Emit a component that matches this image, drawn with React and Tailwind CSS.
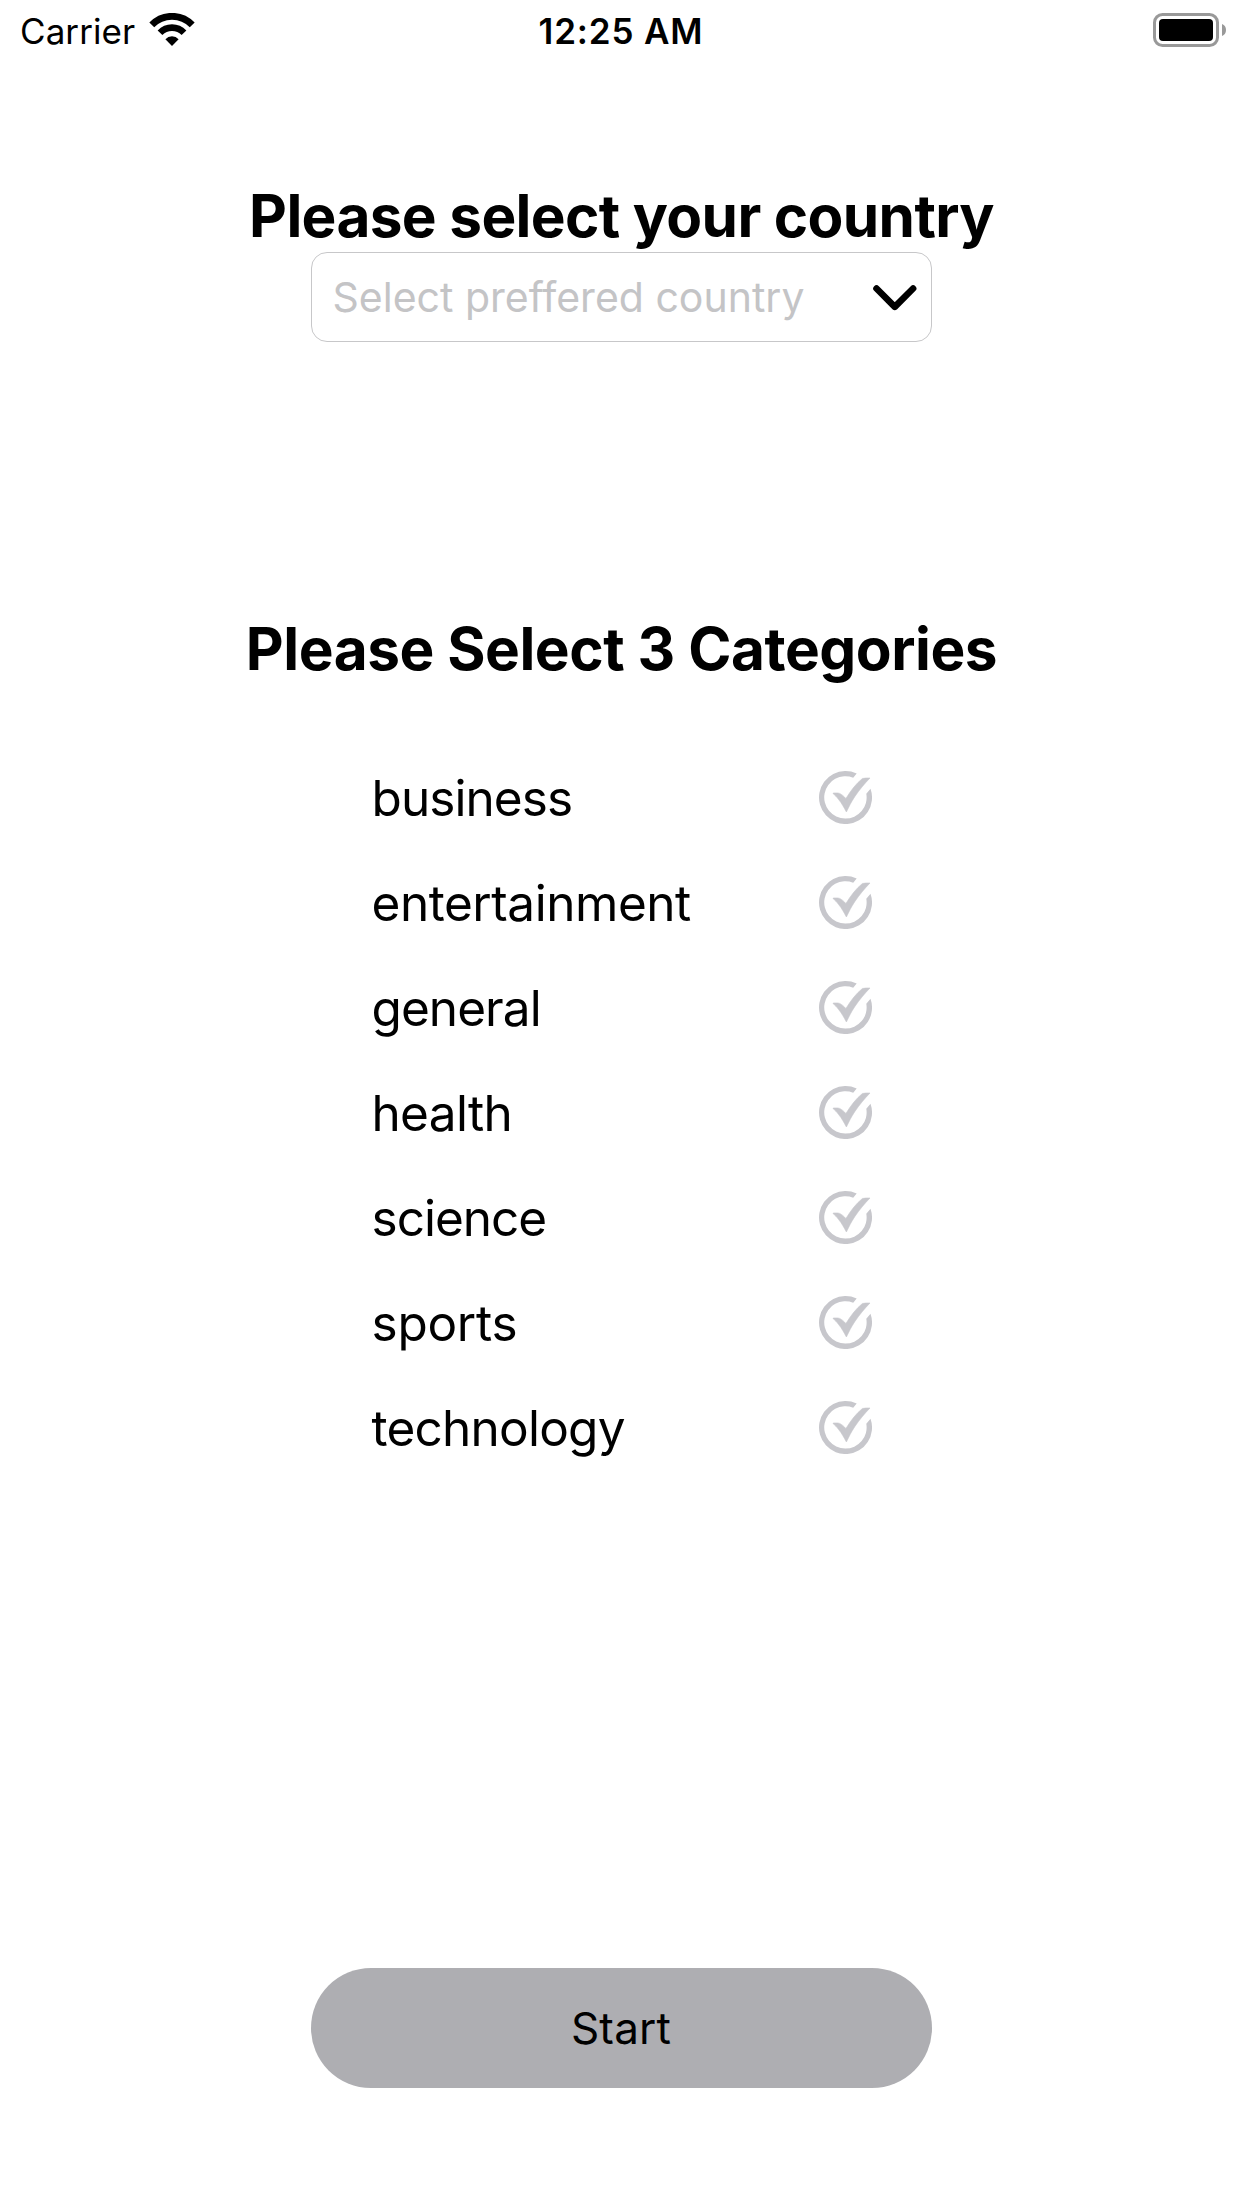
import React from "react";

const categories = [
  { name: "business", tracking: "tracking-[-0.93px]" },
  { name: "entertainment", tracking: "tracking-[-0.45px]" },
  { name: "general", tracking: "tracking-[-0.93px]" },
  { name: "health", tracking: "tracking-[-0.66px]" },
  { name: "science", tracking: "tracking-[-1px]" },
  { name: "sports", tracking: "tracking-[-0.25px]" },
  { name: "technology", tracking: "tracking-[-0.77px]" },
];

function WifiIcon() {
  return (
    <svg width="46" height="33" viewBox="0 0 46 33" fill="none" stroke="#000">
      <path d="M2.8 11.9A28 28 0 0 1 43.2 11.9" strokeWidth="6.8" />
      <path d="M11 19.7A16.7 16.7 0 0 1 35 19.7" strokeWidth="6.6" />
      <path d="M16.4 26.3A8.9 8.9 0 0 1 29.6 26.3L23 33Z" fill="#000" stroke="none" />
    </svg>
  );
}

function BatteryIcon() {
  return (
    <svg width="74" height="34" viewBox="0 0 74 34">
      <rect x="1.5" y="1.5" width="63" height="31" rx="8" fill="none" stroke="#999" strokeWidth="3" />
      <rect x="6" y="6" width="54" height="22" rx="4" />
      <path d="M69 11C71.6 12 73 14.3 73 17S71.6 22 69 23Z" fill="#999" />
    </svg>
  );
}

function CheckIcon() {
  return (
    <svg width="53" height="53" viewBox="0 0 53 53" fill="#c7c7cc">
      <path d="M37.7 2.5A26.5 26.5 0 1 0 51.5 17.7L47.3 22.7A21.2 21.2 0 1 1 34.2 6.7Z" />
      <path
        d="M14.2 22C17 21.8 19.3 21.9 20.6 22.4C23 23.6 25 25.3 26.9 27.5C31.5 20 37 12.6 43.4 7.5C45.5 7 48.5 6.9 51 7C45.3 12.8 40.4 18.9 35.6 25.9C32.3 30.8 30 35.6 27.4 41C25 36.5 22.6 32 19.6 28.5C18 26.3 15.7 24 14.2 22.8Z"
        stroke="#c7c7cc"
        strokeWidth="0.6"
      />
    </svg>
  );
}

export default function App() {
  return (
    <div className="flex h-[2208px] w-[1242px] flex-col items-center bg-white font-['Inter',sans-serif] text-black">
      <header className="grid h-[62px] w-full grid-cols-3 items-center pr-[15px] pl-5 text-[35px] leading-[62px]">
        <div className="flex items-center gap-[14px]">
          <span className="tracking-[0.07px]">Carrier</span>
          <div className="-mt-[3px]">
            <WifiIcon />
          </div>
        </div>
        <span className="-ml-[5px] text-center font-semibold tracking-[0.83px]">12:25 AM</span>
        <div className="-mt-0.5 flex justify-end">
          <BatteryIcon />
        </div>
      </header>

      <h1 className="mt-[118px] pl-px text-[58.5px] leading-[72px] font-bold tracking-[-0.635px]">
        Please select your country
      </h1>
      <button className="flex h-[90px] w-[621px] items-center justify-between rounded-[16px] border border-[#c7c7c9] pr-[14px] pl-[21px] pt-px text-[41px] text-[#c4c4c6]">
        <span className="[font-variant-ligatures:none]">Select preffered country</span>
        <svg width="44" height="26" viewBox="0 0 44 26" fill="none" stroke="#000" strokeWidth="6.6" strokeLinecap="round" strokeLinejoin="round">
          <path d="M3.5 3.5L21.8 21.8L40.1 3.5" />
        </svg>
      </button>

      <h2 className="mt-[271px] pl-px text-[58.5px] leading-[72px] font-bold tracking-[-0.46px]">
        Please Select 3 Categories
      </h2>
      <ul className="mt-[60px] w-[502px]">
        {categories.map(({ name, tracking }) => (
          <li key={name} className="flex h-[105px] items-center justify-between pl-[1.5px] text-[49.5px] leading-[72px]">
            <span className={tracking}>{name}</span>
            <CheckIcon />
          </li>
        ))}
      </ul>

      <button className="mt-[488px] h-[120px] w-[621px] rounded-full bg-[#aeaeb2] text-[44px] tracking-[0.2px]">
        Start
      </button>
    </div>
  );
}
